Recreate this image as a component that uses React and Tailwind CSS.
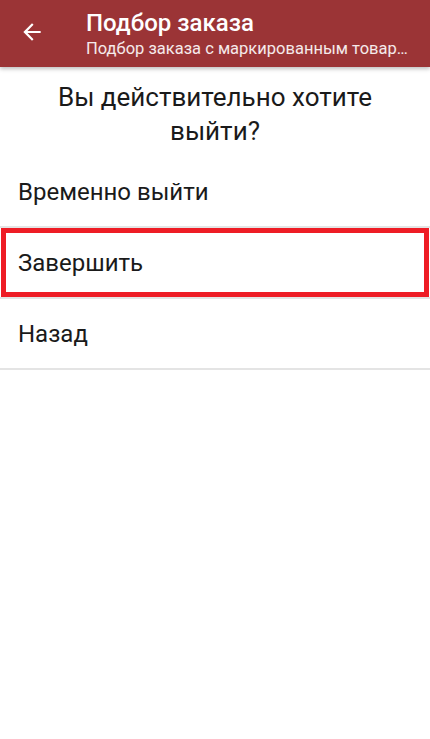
export default function App() {
  const items = [
    { label: 'Временно выйти' },
    { label: 'Завершить', marked: true },
    { label: 'Назад' },
  ]

  return (
    <div className="min-h-[739px] w-[430px] bg-white" style={{ fontFamily: 'Roboto, "Noto Sans", sans-serif' }}>
      {/* шапка */}
      <header className="relative z-10 flex h-[67px] items-center bg-[#9b3436] text-white shadow-[0_2px_4px_rgba(0,0,0,0.25)]">
        <div className="flex w-[86px] shrink-0 justify-start pl-[19px] pb-[3px]">
          <svg width="26" height="26" viewBox="0 0 24 24" fill="currentColor">
            <path d="M20 11H7.83l5.59-5.59L12 4l-8 8 8 8 1.41-1.41L7.83 13H20v-2z" />
          </svg>
        </div>
        <div className="min-w-0 flex-1 pr-[18px]">
          <div className="text-[24px] font-medium leading-[29px]">Подбор заказа</div>
          <div className="truncate text-[16.5px] leading-[21px] text-white/90">
            Подбор заказа с маркированным товаром
          </div>
        </div>
      </header>

      <main>
        <h1 className="px-6 pt-[13px] text-center text-[26px] leading-[34px] text-[#1a1a1a]">
          Вы действительно хотите выйти?
        </h1>

        <ul className="mt-[9px]">
          {items.map((item, i) => (
            <li key={i} className="border-b-2 border-[#e4e4e4]">
              {item.marked ? (
                <div className="mx-[1px] flex h-[69px] items-center border-[5px] border-[#ee1c25] pl-[12px] text-[24px] text-[#1a1a1a]">
                  {item.label}
                </div>
              ) : (
                <div className="flex h-[69px] items-center pl-[18px] text-[24px] text-[#1a1a1a]">
                  {item.label}
                </div>
              )}
            </li>
          ))}
        </ul>
      </main>
    </div>
  )
}
